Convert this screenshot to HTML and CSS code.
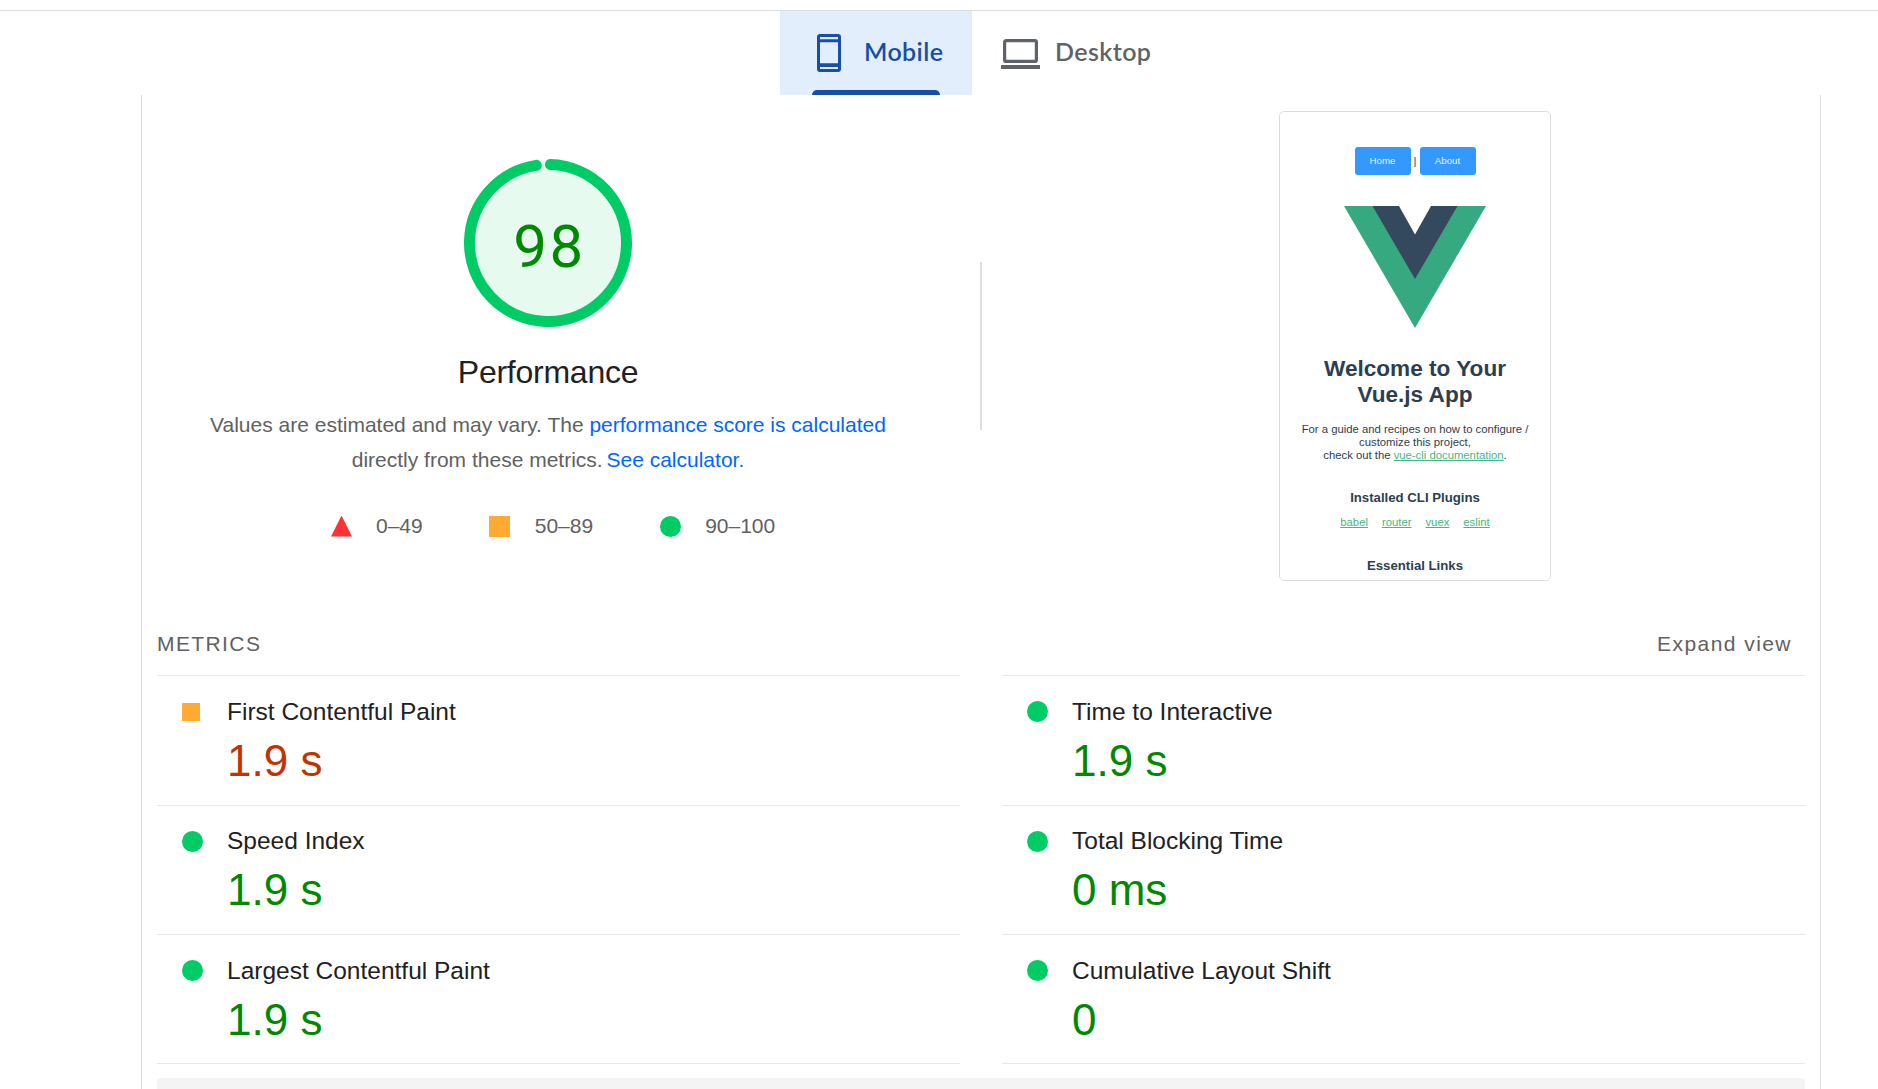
FILE: index.html
```html
<!DOCTYPE html>
<html lang="en">
<head>
<meta charset="utf-8">
<title>PageSpeed Insights</title>
<link rel="stylesheet" href="styles.css">
</head>
<body>
<nav class="tabs">
  <a class="tab tab-active">
    <svg class="icon-mobile" width="24" height="38" viewBox="0 0 24 38"><path fill="#174ea6" fill-rule="evenodd" d="M3 0H21A3 3 0 0 1 24 3V35A3 3 0 0 1 21 38H3A3 3 0 0 1 0 35V3A3 3 0 0 1 3 0ZM3 3V5.3H21V3ZM3 8.3V29.3H21V8.3ZM3 33V35H21V33Z"/></svg>
    <span class="mobile-label">Mobile</span>
  </a>
  <a class="tab">
    <svg class="icon-desktop" width="39" height="30" viewBox="0 0 39 30"><rect x="3.6" y="1.6" width="31.8" height="20.8" rx="1.5" fill="none" stroke="#5f6368" stroke-width="3.2"/><path fill="#5f6368" d="M0 26H39V30H0Z"/></svg>
    <span class="desktop-label">Desktop</span>
  </a>
</nav>
<main class="panel">
  <section class="overview">
    <div class="score">
      <div class="gauge">
        <svg class="gauge-ring" width="168" height="168" viewBox="0 0 168 168"><circle cx="84" cy="84" r="83.5" fill="#e6faf0"/><circle cx="84" cy="84" r="78.5" fill="none" stroke="#0c6" stroke-width="11" stroke-linecap="round" pathLength="360" stroke-dasharray="349.6 360" transform="rotate(-88.2 84 84)"/></svg>
        <span class="gauge-value">98</span>
      </div>
      <h1 class="score-title">Performance</h1>
      <p class="score-text">Values are estimated and may vary. The <a class="link">performance score is calculated</a><br>directly from these metrics. <a class="link calculator">See calculator.</a></p>
      <div class="legend">
        <span class="legend-item"><i class="mark triangle"></i>0–49</span>
        <span class="legend-item legend-average"><i class="mark square"></i>50–89</span>
        <span class="legend-item"><i class="mark circle"></i>90–100</span>
      </div>
    </div>
    <div class="divider"></div>
    <div class="preview">
      <div class="app-nav"><span class="app-button">Home</span><span class="app-pipe">|</span><span class="app-button">About</span></div>
      <svg class="app-logo" width="142" height="122" viewBox="0 0 142 122"><path fill="#37a980" d="M0 0H142L71 122Z"/><path fill="#34495e" d="M28.5 0H113.5L71 73Z"/><path fill="#fff" d="M55 0H87L71 28.5Z"/></svg>
      <h2 class="app-title">Welcome to Your<br>Vue.js App</h2>
      <p class="app-text">For a guide and recipes on how to configure /<br>customize this project,<br>check out the <a class="app-link">vue-cli documentation</a>.</p>
      <h3 class="app-subtitle">Installed CLI Plugins</h3>
      <div class="app-plugins"><a class="app-link">babel</a><a class="app-link">router</a><a class="app-link">vuex</a><a class="app-link">eslint</a></div>
      <h3 class="app-subtitle app-essential">Essential Links</h3>
    </div>
  </section>
  <div class="metrics-head"><span class="metrics-name">METRICS</span><span class="expand">Expand view</span></div>
  <section class="metrics">
    <div class="metric"><i class="mark square small"></i><div><div class="metric-title">First Contentful Paint</div><div class="metric-value average">1.9 s</div></div></div>
    <div class="metric"><i class="mark circle"></i><div><div class="metric-title">Time to Interactive</div><div class="metric-value">1.9 s</div></div></div>
    <div class="metric middle"><i class="mark circle"></i><div><div class="metric-title">Speed Index</div><div class="metric-value">1.9 s</div></div></div>
    <div class="metric middle"><i class="mark circle"></i><div><div class="metric-title">Total Blocking Time</div><div class="metric-value">0 ms</div></div></div>
    <div class="metric last"><i class="mark circle"></i><div><div class="metric-title">Largest Contentful Paint</div><div class="metric-value">1.9 s</div></div></div>
    <div class="metric last"><i class="mark circle"></i><div><div class="metric-title">Cumulative Layout Shift</div><div class="metric-value">0</div></div></div>
  </section>
  <div class="notice"></div>
</main>
</body>
</html>
```
FILE: styles.css
```css
* { box-sizing: border-box; }
body {
  margin: 0;
  height: 1089px;
  overflow: hidden;
  padding-top: 10px;
  background: #fff;
  color: #212121;
  font-family: "Liberation Sans", Arial, sans-serif;
}
h1, h2, h3, p { margin: 0; font-weight: 400; }

.tabs {
  display: flex;
  height: 85px;
  padding-left: 780px;
  border-top: 1px solid #dadce0;
  font: 600 25px/30px Lato, sans-serif;
  letter-spacing: .4px;
  color: #5f6368;
}
.tab { position: relative; display: flex; align-items: flex-start; width: 192px; height: 84px; }
.tab + .tab { width: 220px; }
.tab-active { background: #e2eefb; color: #174ea6; }
.tab-active::after {
  content: "";
  position: absolute;
  left: 32px;
  bottom: 0;
  width: 128px;
  height: 5px;
  border-radius: 5px 5px 0 0;
  background: #174ea6;
}
.icon-mobile { margin: 23px 0 0 37px; }
.icon-desktop { margin: 28px 0 0 29px; }
.mobile-label { margin: 25px 0 0 23px; }
.desktop-label { margin: 25px 0 0 15px; }

.panel {
  width: 1680px;
  height: 994px;
  margin-left: 141px;
  padding: 0 15px;
  border: solid #dadce0;
  border-width: 0 1px;
}
.overview { display: flex; height: 534px; }
.score { width: 782px; padding-top: 64px; }
.gauge { display: grid; place-items: center; width: 168px; height: 168px; margin: 0 auto; }
.gauge > * { grid-area: 1 / 1; }
.gauge-value { font: 400 60px/60px Roboto, sans-serif; letter-spacing: 2.6px; color: #080; padding: 7px 0 0 3px; z-index: 1; }
.score-title { margin-top: 25px; font-size: 32px; line-height: 40px; text-align: center; letter-spacing: -.25px; }
.score-text { margin-top: 15px; font-size: 21px; line-height: 35px; text-align: center; color: #616161; }
.link { color: #06f; }
.calculator { margin-left: -2px; }
.legend { display: flex; gap: 67px; margin: 37px 0 0 174px; font-size: 21px; line-height: 24px; color: #616161; }
.legend-item { display: flex; align-items: center; gap: 24px; }
.legend-average { gap: 25px; margin-left: -1px; }
.mark { flex: none; width: 21px; height: 21px; }
.triangle { background: #f33; clip-path: polygon(50% 0, 100% 100%, 0 100%); }
.square { background: #fa3; }
.circle { background: #0c6; border-radius: 50%; }

.divider { width: 2px; height: 168px; margin: 167px 0 0 41px; background: #dedede; }

.preview {
  display: flex;
  flex-direction: column;
  align-items: center;
  width: 272px;
  height: 470px;
  margin: 16px 0 0 297px;
  border: 1px solid #dadce0;
  border-radius: 5px;
  text-align: center;
  color: #2c3e50;
}
.app-nav { display: flex; align-items: center; margin-top: 35px; font-size: 9.7px; line-height: 28px; }
.app-button { width: 56px; height: 28px; border-radius: 3px; background: #39f; color: #e9f4ff; }
.app-pipe { width: 9px; font-size: 11.3px; }
.app-logo { margin-top: 30.5px; }
.app-title { margin-top: 28.5px; font-size: 22.6px; line-height: 26px; font-weight: 700; }
.app-text { margin-top: 15px; font-size: 11.3px; line-height: 12.8px; }
.app-link { color: #42b983; text-decoration: underline; }
.app-subtitle { margin-top: 29px; font-size: 13.2px; line-height: 16px; font-weight: 700; }
.app-plugins { display: flex; gap: 14px; margin-top: 8px; font-size: 11.3px; line-height: 16px; }
.app-essential { margin-top: 28px; }

.metrics-head {
  display: flex;
  justify-content: space-between;
  height: 46px;
  padding-right: 13px;
  font-size: 21px;
  line-height: 30px;
  color: #616161;
}
.metrics-name { letter-spacing: 1.4px; }
.expand { letter-spacing: 1.45px; }
.metrics { display: grid; grid-template: 130px 129px 130px / 803px 803px; column-gap: 42px; }
.metric { display: flex; padding: 21px 0 0 25px; border-top: 1px solid #e6e6e6; }
.metric .mark { margin: 4px 24px 0 0; }
.metric .small { width: 18px; height: 18px; margin: 6px 27px 0 0; }
.middle { padding-top: 20px; }
.middle .mark { margin-top: 5px; }
.last { border-bottom: 1px solid #e6e6e6; }
.metric-title { font-size: 24.5px; line-height: 30px; }
.metric-value { margin-top: 9px; font-size: 44px; line-height: 50px; color: #080; }
.average { color: #c33300; }
.notice { height: 11px; margin-top: 14px; border-radius: 4px 4px 0 0; background: #f4f4f4; }
```
